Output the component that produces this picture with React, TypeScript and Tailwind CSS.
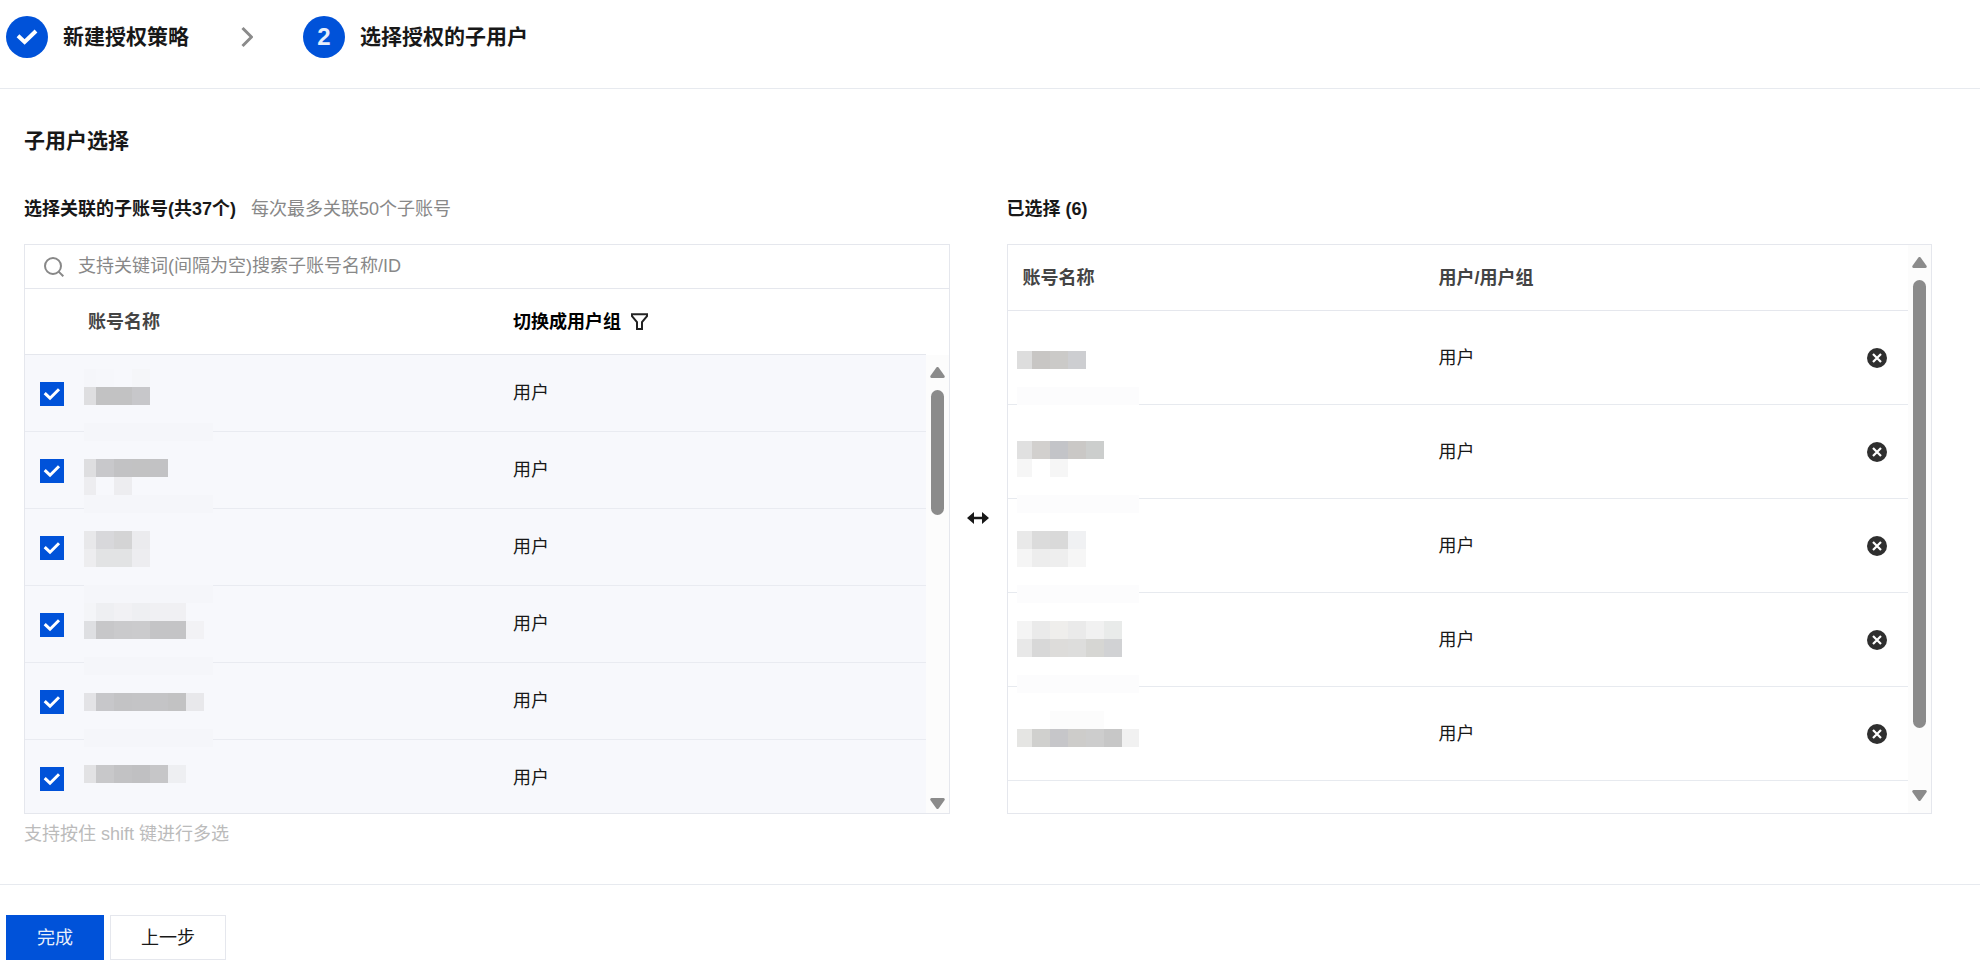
import { useState } from "react";

interface MosaicProps {
  rows: (string[] | null)[];
  className: string;
  cellClassName: string;
}

const LEFT_BG = "#f7f8fc";
const LEFT_FAINT = Array(8).fill("#f5f6fa");
const RIGHT_FAINT = Array(7).fill("#fcfcfd");

// one entry for every 18px line of the masked names, null = empty line
const leftMosaic: (string[] | null)[] = [
  ["#f5f6fa", "#f6f7fb", "#f7f8fc", "#f5f6f9"],
  ["#dedee0", "#c2c2c3", "#c2c2c3", "#c7c7ca"],
  null,
  LEFT_FAINT,
  null,
  ["#dedee0", "#c8c8cb", "#c2c2c4", "#c2c2c3", "#c2c2c4"],
  ["#ededf0", LEFT_BG, "#ededf0"],
  LEFT_FAINT,
  null,
  ["#e8e8ea", "#d8d8db", "#d4d4d5", "#ebebee"],
  ["#ededef", "#e2e3e4", "#e2e3e4", "#ededf0"],
  null,
  LEFT_FAINT,
  ["#f4f5f8", "#eeeff2", "#f1f1f4", "#eeeff2", "#f0f0f3", "#f0f0f3"],
  ["#dedfe2", "#c7c7c9", "#cacacc", "#cbcbcd", "#c4c4c6", "#c4c4c6", "#f2f2f5"],
  null,
  LEFT_FAINT,
  null,
  ["#e3e3e6", "#c7c7ca", "#c3c3c5", "#c4c4c6", "#c4c4c6", "#c2c2c3", "#e8e8eb"],
  null,
  LEFT_FAINT,
  null,
  ["#e2e2e4", "#c8c8ca", "#c2c2c4", "#c0c0c2", "#c6c6c8", "#eeeff2"],
];

const rightMosaic: (string[] | null)[] = [
  ["#dddddd", "#c8c6c4", "#cbcac8", "#cdced1"],
  null,
  RIGHT_FAINT,
  null,
  null,
  ["#e0e0e0", "#d2d0ce", "#c3c4c8", "#cac8c6", "#cccecd"],
  ["#f6f6f6", "#ffffff", "#f6f6f6"],
  null,
  RIGHT_FAINT,
  null,
  ["#e9e9e9", "#dbdbdb", "#d9d9d9", "#f0f1f3"],
  ["#f5f5f5", "#ededed", "#eeeeee", "#f6f6f6"],
  null,
  RIGHT_FAINT,
  null,
  ["#f4f4f4", "#eaeaea", "#efeeec", "#eaeaea", "#f1f1f1", "#e9ebea"],
  ["#e8e8e8", "#d8d8d8", "#dddcda", "#dddddc", "#d6d6d3", "#d1d2d4"],
  null,
  RIGHT_FAINT,
  null,
  ["#ffffff", "#ffffff", "#fcfcfc", "#fcfcfc", "#fcfcfc"],
  ["#e5e5e3", "#d0d0ce", "#c6c6c9", "#cdccca", "#cdcdcd", "#c7c7c7", "#f1f1f1"],
  null,
];

const Mosaic: React.FC<MosaicProps> = ({ rows, className, cellClassName }) => {
  return (
    <div className={`absolute overflow-hidden ${className}`} aria-hidden="true">
      {rows.map((cells, i) => (
        <div key={i} className="flex h-[18px]">
          {cells?.map((color, j) => (
            <span
              key={j}
              className={`w-[18px] shrink-0 ${cellClassName}`}
              style={{ backgroundColor: color }}
            />
          ))}
        </div>
      ))}
    </div>
  );
};

interface ScrollBarProps {
  className: string;
  thumbClassName: string;
}

const ScrollBar: React.FC<ScrollBarProps> = ({ className, thumbClassName }) => {
  return (
    <div
      className={`flex w-[23px] shrink-0 flex-col items-center bg-[#fcfcfc] pt-3 ${className}`}
      aria-hidden="true"
    >
      <svg width="15" height="11" viewBox="0 0 15 11" fill="#8b8b8b">
        <path d="M6.2.8a1.6 1.6 0 0 1 2.6 0l5.7 8a1.4 1.4 0 0 1-1.1 2.2H1.6A1.4 1.4 0 0 1 .5 8.8z" />
      </svg>
      <div className={`mt-3 w-[13px] rounded-full bg-[#8b8b8b] ${thumbClassName}`} />
      <svg className="mt-auto" width="15" height="11" viewBox="0 0 15 11" fill="#8b8b8b">
        <path d="M8.8 10.2a1.6 1.6 0 0 1-2.6 0l-5.7-8A1.4 1.4 0 0 1 1.6 0h11.8a1.4 1.4 0 0 1 1.1 2.2z" />
      </svg>
    </div>
  );
};

const RowCheckbox: React.FC<{ label: string }> = ({ label }) => {
  const [checked, setChecked] = useState(true);
  return (
    <span className="grid size-6">
      <input
        type="checkbox"
        aria-label={label}
        checked={checked}
        onChange={() => setChecked(!checked)}
        className="peer col-start-1 row-start-1 size-6 appearance-none border border-[#cfd5de] bg-white checked:border-[#0052d9] checked:bg-[#0052d9]"
      />
      <svg
        className="pointer-events-none invisible col-start-1 row-start-1 peer-checked:visible"
        width="24"
        height="24"
        viewBox="0 0 24 24"
        fill="none"
        stroke="#fff"
        strokeWidth="3"
      >
        <path d="M4.7 11.2l5.3 5 9-9" />
      </svg>
    </span>
  );
};

const App: React.FC = () => {
  return (
    <div className="bg-white font-['Liberation_Sans','Noto_Sans_CJK_SC',sans-serif] text-[18px] leading-7 text-[#181818]">
      <ol className="flex items-center border-b border-[#e7eaef] px-1.5 pt-4 pb-[30px] text-[21px] font-bold">
        <li className="flex items-center">
          <span className="flex size-[42px] items-center justify-center rounded-full bg-[#0052d9]">
            <svg width="22" height="18" viewBox="0 0 22 18" fill="none" stroke="#fff" strokeWidth="4">
              <path d="M2 7.8l6.6 6.2L20 3" />
            </svg>
          </span>
          <span className="ml-[15px]">新建授权策略</span>
        </li>
        <li className="mx-[50px] flex w-[14px] justify-center" aria-hidden="true">
          <svg width="14" height="22" viewBox="0 0 14 22" fill="none" stroke="#8b8b8b" strokeWidth="3">
            <path d="M3.5 2l9 9-9 9" />
          </svg>
        </li>
        <li className="flex items-center" aria-current="step">
          <span className="flex size-[42px] items-center justify-center rounded-full bg-[#0052d9] text-2xl text-[#e8effb]">
            2
          </span>
          <span className="ml-[15px]">选择授权的子用户</span>
        </li>
      </ol>

      <main className="border-b border-[#e7eaef] pt-[38px] pr-12 pb-9 pl-6">
        <h2 className="text-[21px] font-bold">子用户选择</h2>

        <div className="mt-10 flex">
          <section className="min-w-0 flex-1">
            <div className="flex gap-[15px]">
              <h3 className="font-bold">选择关联的子账号(共37个)</h3>
              <span className="text-[#888]">每次最多关联50个子账号</span>
            </div>

            <div className="mt-[21px] h-[570px] overflow-hidden border border-[#e5e7ed]">
              <label className="flex h-11 items-center gap-3.5 border-b border-[#e5e7ed] pl-[19px]">
                <svg width="20" height="20" viewBox="0 0 20 20" fill="none" stroke="#888" strokeWidth="2">
                  <circle cx="9" cy="9" r="8" />
                  <path d="M14.6 14.6l4.7 4.7" />
                </svg>
                <input
                  type="text"
                  aria-label="搜索子账号"
                  placeholder="支持关键词(间隔为空)搜索子账号名称/ID"
                  className="h-full flex-1 outline-none placeholder:text-[#888]"
                />
              </label>

              <div className="relative flex h-[524px]">
                <div className="flex-1 overflow-hidden">
                  <table className="w-full table-fixed border-separate border-spacing-0 text-left">
                    <thead>
                      <tr className="h-[66px]">
                        <th className="w-12 border-b border-[#e5e7ed]" aria-label="选择" />
                        <th className="w-[47.3%] border-b border-[#e5e7ed] px-[15px] text-[#444]">
                          账号名称
                        </th>
                        <th className="border-b border-[#e5e7ed] px-3.5 text-black">
                          <button className="flex items-center gap-[10px] font-bold">
                            切换成用户组
                            <svg
                              width="17"
                              height="17"
                              viewBox="0 0 17 17"
                              fill="none"
                              stroke="#222"
                              strokeWidth="2"
                            >
                              <path d="M1 1.2h15v2L11 9v7H6V9L1 3.2z" />
                            </svg>
                          </button>
                        </th>
                      </tr>
                    </thead>
                    <tbody className="bg-[#f7f8fc]">
                      {[1, 2, 3, 4, 5, 6].map((row) => (
                        <tr key={row} className="h-[77px]">
                          <td className="border-b border-[#e9ebf1] pt-0.5 pl-[15px]">
                            <RowCheckbox label={`子账号 ${row}`} />
                          </td>
                          <td className="border-b border-[#e9ebf1]" />
                          <td className="border-b border-[#e9ebf1] px-3.5">用户</td>
                        </tr>
                      ))}
                    </tbody>
                  </table>
                </div>
                <div className="flex pt-[66px]">
                  <ScrollBar className="pb-1" thumbClassName="h-[125px]" />
                </div>
                <Mosaic
                  rows={leftMosaic}
                  className="top-[80px] left-[59px] w-[129px] bg-[#f7f8fc]"
                  cellClassName="first:w-3"
                />
              </div>
            </div>

            <p className="mt-1.5 text-[#bbb]">支持按住 shift 键进行多选</p>
          </section>

          <div className="flex w-[57px] items-center justify-center pb-2">
            <svg width="22" height="12" viewBox="0 0 22 12" fill="#181818">
              <path d="M0 6l7-6v4.7h8V0l7 6-7 6V7.3H7V12z" />
            </svg>
          </div>

          <section className="min-w-0 flex-1">
            <h3 className="font-bold">已选择 (6)</h3>

            <div className="relative mt-[21px] flex h-[570px] overflow-hidden border border-[#e5e7ed]">
              <div className="flex-1">
                <table className="w-full table-fixed border-separate border-spacing-0 text-left">
                  <thead>
                    <tr className="h-[66px] text-[#444]">
                      <th className="w-[46.2%] border-b border-[#e5e7ed] px-[15px]">账号名称</th>
                      <th className="border-b border-[#e5e7ed] px-[15px]">用户/用户组</th>
                      <th className="w-[72px] border-b border-[#e5e7ed]" aria-label="操作" />
                    </tr>
                  </thead>
                  <tbody>
                    {[1, 2, 3, 4, 5].map((row) => (
                      <tr key={row} className="h-[94px]">
                        <td className="border-b border-[#e7eaef]" />
                        <td className="border-b border-[#e7eaef] px-[15px]">用户</td>
                        <td className="border-b border-[#e7eaef] pr-[21px]">
                          <button className="ml-auto block" aria-label="移除">
                            <svg width="20" height="20" viewBox="0 0 20 20">
                              <circle cx="10" cy="10" r="10" fill="#2f2f2f" />
                              <path d="M6 6l8 8M14 6l-8 8" stroke="#fff" strokeWidth="2.2" />
                            </svg>
                          </button>
                        </td>
                      </tr>
                    ))}
                  </tbody>
                </table>
              </div>
              <ScrollBar className="pb-3" thumbClassName="h-[448px]" />
              <Mosaic
                rows={rightMosaic}
                className="top-[106px] left-[9px] w-[122px] bg-white"
                cellClassName="first:w-[15px]"
              />
            </div>
          </section>
        </div>
      </main>

      <footer className="flex gap-1.5 px-1.5 pt-[30px] pb-[17px]">
        <button className="h-[45px] w-[98px] bg-[#0052d9] text-[#e8effb]">完成</button>
        <button className="h-[45px] w-[116px] border border-[#e5e7ed] bg-white">上一步</button>
      </footer>
    </div>
  );
};

export default App;
